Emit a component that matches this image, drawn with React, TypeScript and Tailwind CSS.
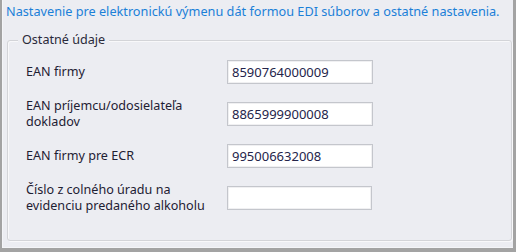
export default function App() {
  const rows: { label: string[]; value: string }[] = [
    { label: ["EAN firmy"], value: "8590764000009" },
    { label: ["EAN príjemcu/odosielateľa", "dokladov"], value: "8865999900008" },
    { label: ["EAN firmy pre ECR"], value: "995006632008" },
    { label: ["Číslo z colného úradu na", "evidenciu predaného alkoholu"], value: "" },
  ];
  return (
    <div
      className="relative w-[516px] h-[252px] bg-[#ecedf2] border-l-2 border-r-[3px] border-b-[4px] border-[#a3a3a3] overflow-hidden"
      style={{ fontFamily: '"Noto Sans", sans-serif' }}
    >
      <div className="h-full border-l border-b border-[#f4f5f8] flex flex-col">
        <div className="pl-[3px] pt-[3px] h-[34px] text-[12.7px] leading-[16px] text-[#1b80d8] whitespace-nowrap">
          Nastavenie pre elektronickú výmenu dát formou EDI súborov a ostatné nastavenia.
        </div>
        <div className="relative ml-[4px] mr-[1px] mt-[6px] h-[201px] rounded-[3px] border border-[#d3d4d8] shadow-[inset_1px_1px_0_#f8f8fa,1px_1px_0_#f8f8fa]">
          <div className="absolute left-[10px] top-[-9px] px-[4px] bg-[#ecedf2] text-[12.6px] leading-[16px] text-[#2a2a3a]">
            Ostatné údaje
          </div>
          <div className="flex flex-col gap-[14px] pl-[18px] pt-[19px]">
            {rows.map((r, i) => (
              <div key={i} className="flex items-center">
                <div className="w-[201px] text-[12.6px] leading-[16px] text-[#1e2032] whitespace-nowrap">
                  {r.label.map((l, j) => (
                    <div key={j}>{l}</div>
                  ))}
                </div>
                <div
                  className={`h-[24px] ${i === 3 ? "w-[145px]" : "w-[146px]"} bg-white border border-[#c4c6cc] shadow-[inset_0_0_0_1px_#f0f0f2] pl-[4px] text-[13px] leading-[22px] text-[#24244a]`}
                >
                  {r.value}
                </div>
              </div>
            ))}
          </div>
        </div>
      </div>
    </div>
  );
}
